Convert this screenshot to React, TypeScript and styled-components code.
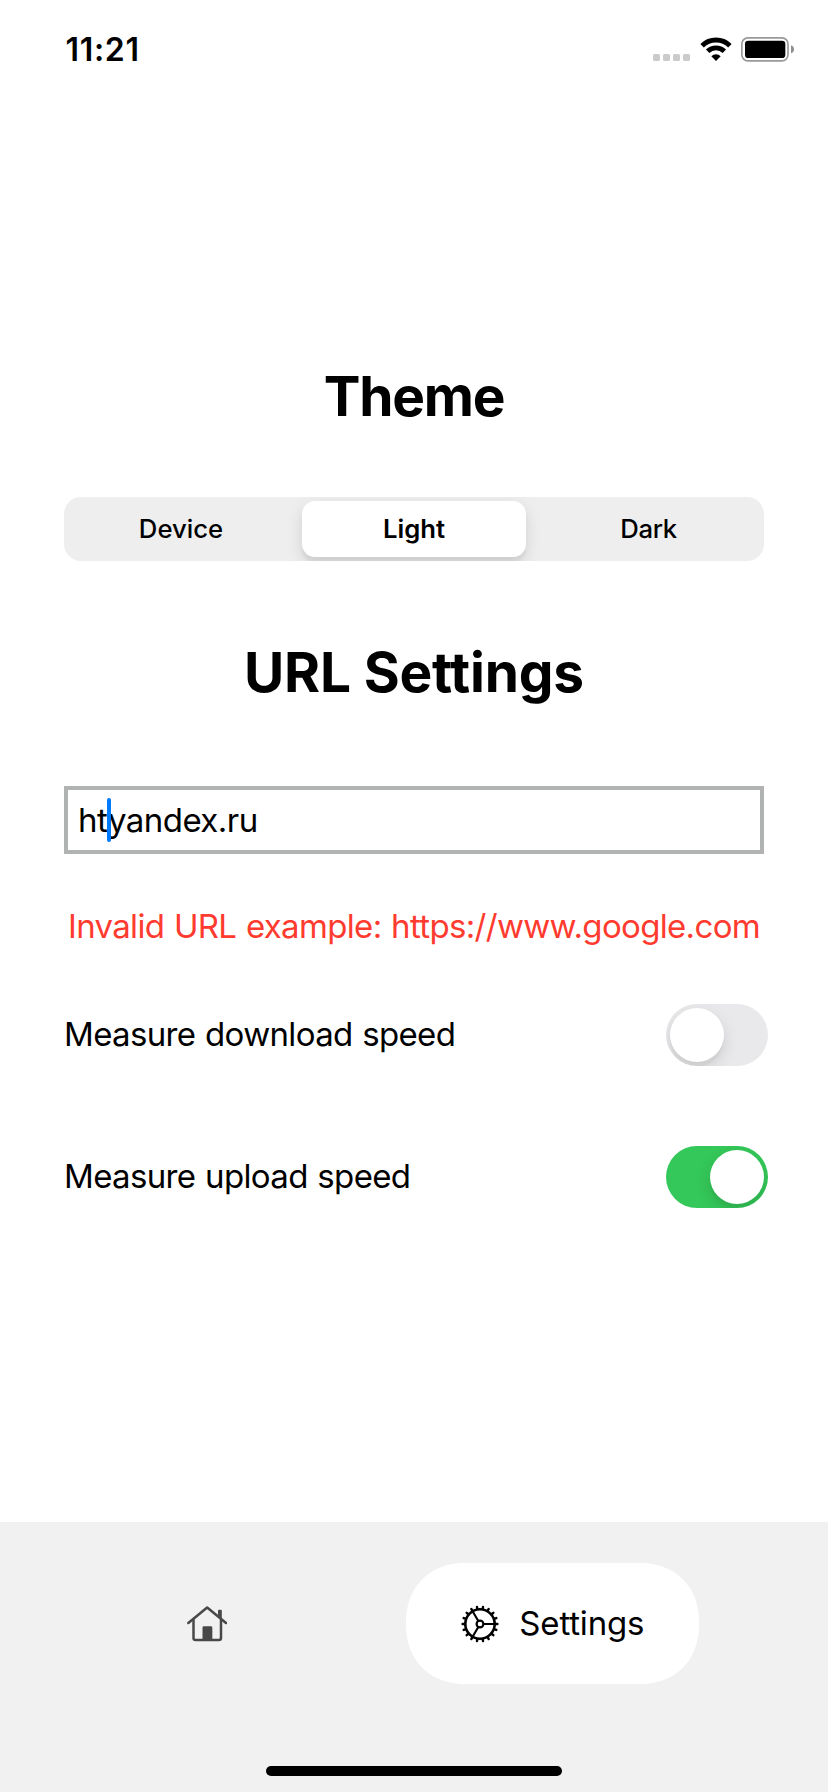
import React, { useState } from "react";
import styled, { createGlobalStyle } from "styled-components";

const GlobalStyle = createGlobalStyle`
  * { box-sizing: border-box; }
  body { margin: 0; background: #fff; }
  button { border: 0; padding: 0; background: none; font: inherit; color: inherit; }
`;

const Screen = styled.div`
  display: flex;
  flex-direction: column;
  width: 828px;
  height: 1792px;
  background: #fff;
  color: #000;
  font-family: Inter, "Liberation Sans", sans-serif;
  font-size: 33px;
  line-height: 40px;
  overflow: hidden;
  white-space: nowrap;
`;

const StatusBar = styled.header`
  display: flex;
  justify-content: space-between;
  height: 88px;
  padding: 30px 32px 0 65.5px;
`;

const Clock = styled.time`
  font-size: 32px;
  line-height: 39px;
  font-weight: 600;
  letter-spacing: 0.7px;
`;

const StatusIcons = styled.div`
  display: flex;
  align-items: flex-start;
  padding-top: 6px;
`;

const SignalDots = styled.div`
  display: flex;
  gap: 3px;
  margin: 18px 8.5px 0 0;
`;

const Dot = styled.span`
  width: 7px;
  height: 7px;
  border-radius: 1.5px;
  background: #cbcbcb;
`;

const Battery = styled.svg`
  width: 56px;
  height: 26px;
  margin-left: 7.5px;
`;

const Content = styled.main`
  display: flex;
  flex: 1;
  flex-direction: column;
  padding: 275px 64px 0;
`;

const Heading = styled.h1<{ $spacing: number }>`
  margin: 0;
  font-size: 55px;
  line-height: 66px;
  font-weight: 700;
  text-align: center;
  letter-spacing: ${(p) => p.$spacing}px;
`;

const Segmented = styled.div`
  display: grid;
  grid-template-columns: 1fr 224px 1fr;
  height: 64px;
  margin: 68px 0 78px;
  padding: 4px 0;
  border-radius: 17px;
  background: #eee;
  overflow: hidden;
`;

const Segment = styled.button<{ $active: boolean; $side: "left" | "mid" | "right" }>`
  height: 56px;
  padding: ${(p) => (p.$side === "left" ? "0 4px 2px 0" : p.$side === "right" ? "0 0 2px 7px" : "0 0 2px")};
  border-radius: 13px;
  font-size: 25.7px;
  line-height: 31px;
  font-weight: ${(p) => (p.$active ? 600 : 500)};
  letter-spacing: ${(p) => (p.$side === "right" ? -0.35 : 0)}px;
  background: ${(p) => (p.$active ? "#fff" : "transparent")};
  box-shadow: ${(p) => (p.$active ? "0 6px 16px rgba(0,0,0,.12), 0 6px 2px rgba(0,0,0,.04)" : "none")};
`;

const Field = styled.div`
  position: relative;
  height: 68px;
  margin-top: 81px;
  padding: 10px;
  border: 4px solid #b1b3b2;
  letter-spacing: -0.53px;
`;

const Caret = styled.span`
  position: absolute;
  top: 8px;
  left: 39px;
  width: 4px;
  height: 44px;
  border-radius: 2px;
  background: #007aff;
`;

const ErrorText = styled.p`
  margin: 52px -10px 58px;
  color: #ff3b30;
  text-align: center;
  letter-spacing: -0.67px;
  word-spacing: 1px;
`;

const Row = styled.div`
  display: flex;
  align-items: center;
  justify-content: space-between;
  height: 62px;
  margin: 0 -4px 80px 0;
`;

const RowLabel = styled.span`
  padding-bottom: 2px;
  letter-spacing: -0.65px;
  word-spacing: 1px;
`;

const Switch = styled.button<{ $on: boolean }>`
  display: flex;
  justify-content: ${(p) => (p.$on ? "flex-end" : "flex-start")};
  width: 102px;
  height: 62px;
  padding: 4px;
  border-radius: 31px;
  background: ${(p) => (p.$on ? "#34c759" : "#e9e9eb")};
  overflow: hidden;
`;

const Knob = styled.span`
  width: 54px;
  height: 54px;
  border-radius: 50%;
  background: #fff;
  box-shadow: 0 6px 16px rgba(0, 0, 0, 0.12), 0 5px 2px rgba(0, 0, 0, 0.03);
`;

const TabBar = styled.footer`
  display: flex;
  flex-direction: column;
  align-items: center;
  height: 270px;
  padding-top: 41px;
  background: #f1f1f1;
`;

const Tabs = styled.nav`
  display: flex;
  width: 828px;
  height: 121px;
  padding-left: 8px;
`;

const Tab = styled.button<{ $active?: boolean }>`
  display: flex;
  align-items: center;
  justify-content: ${(p) => (p.$active ? "flex-start" : "center")};
  gap: 19px;
  width: ${(p) => (p.$active ? 293 : 397.5)}px;
  padding: ${(p) => (p.$active ? "0 0 0 54.8px" : "2px 0 0")};
  border-radius: 59px;
  corner-shape: superellipse(1.1);
  background: ${(p) => (p.$active ? "#fff" : "transparent")};
  letter-spacing: -0.16px;
`;

const TabLabel = styled.span`
  padding-bottom: 2px;
`;

const HomeIndicator = styled.div`
  width: 296px;
  height: 10px;
  margin-top: 82px;
  border-radius: 5px;
  background: #000;
`;

const WifiIcon = () => (
  <svg width="34" height="26" viewBox="175 48 102 78" fill="none" stroke="#000" strokeWidth="14.5">
    <path d="M184.3 77.3A59 59 0 0 1 267.7 77.3" />
    <path d="M201 94A35.5 35.5 0 0 1 251 94" />
    <path d="M226 123L212 108.5A20 20 0 0 1 240 108.5Z" fill="#000" stroke="none" />
  </svg>
);

const BatteryIcon = () => (
  <Battery viewBox="300 48 168 78">
    <rect x="305.5" y="53.5" width="138.5" height="69" rx="18" fill="none" stroke="#999" strokeWidth="5" />
    <rect x="315" y="62.5" width="121" height="51.5" rx="10" />
    <path d="M453 76Q462 79 462 88T453 100Z" fill="#8e8e8e" />
  </Battery>
);

const HouseIcon = () => (
  <svg width="40" height="36.67" viewBox="50 50 120 110" fill="none" stroke="#484848" strokeLinecap="round" strokeLinejoin="round">
    <path d="M54 101L110.5 54.5L167 101" strokeWidth="7.5" />
    <path d="M69.5 91V146Q69.5 152 76 152H145.5Q152 152 152 146V91" strokeWidth="7.5" />
    <path d="M143 78V64Q143 61 146 61H151.500Q154.500 61 154.500 64V88Z" fill="#484848" stroke="none" />
    <path d="M96.500 152V115Q96.500 111 100.500 111H122Q126 111 126 115V152Z" fill="#484848" stroke="none" />
  </svg>
);

const GearIcon = () => (
  <svg width="40" height="40" viewBox="-20 -20 40 40" fill="none" stroke="#000" strokeLinecap="round">
    <circle r="14.7" strokeWidth="2.6" />
    <circle r="3.4" strokeWidth="2.2" />
    {Array.from({ length: 18 }, (_, i) => (
      <path key={i} d="M15.5 0H17.4" strokeWidth="2.4" transform={`rotate(${i * 20})`} />
    ))}
    {[0, 120, 240].map((a) => (
      <path key={a} d="M4 0H14.5" strokeWidth="2.1" transform={`rotate(${a})`} />
    ))}
  </svg>
);

export default function App() {
  const [theme, setTheme] = useState("Light");
  const [download, setDownload] = useState(false);
  const [upload, setUpload] = useState(true);

  return (
    <Screen>
      <GlobalStyle />
      <StatusBar>
        <Clock>11:21</Clock>
        <StatusIcons>
          <SignalDots>
            <Dot />
            <Dot />
            <Dot />
            <Dot />
          </SignalDots>
          <WifiIcon />
          <BatteryIcon />
        </StatusIcons>
      </StatusBar>

      <Content>
        <Heading $spacing={-1.2}>Theme</Heading>
        <Segmented>
          <Segment $side="left" $active={theme === "Device"} onClick={() => setTheme("Device")}>Device</Segment>
          <Segment $side="mid" $active={theme === "Light"} onClick={() => setTheme("Light")}>Light</Segment>
          <Segment $side="right" $active={theme === "Dark"} onClick={() => setTheme("Dark")}>Dark</Segment>
        </Segmented>

        <Heading $spacing={-0.2}>URL Settings</Heading>
        <Field>
          htyandex.ru
          <Caret />
        </Field>
        <ErrorText>Invalid URL example: https://www.google.com</ErrorText>

        <Row>
          <RowLabel>Measure download speed</RowLabel>
          <Switch $on={download} onClick={() => setDownload(!download)} aria-label="Measure download speed">
            <Knob />
          </Switch>
        </Row>
        <Row>
          <RowLabel>Measure upload speed</RowLabel>
          <Switch $on={upload} onClick={() => setUpload(!upload)} aria-label="Measure upload speed">
            <Knob />
          </Switch>
        </Row>
      </Content>

      <TabBar>
        <Tabs>
          <Tab aria-label="Home">
            <HouseIcon />
          </Tab>
          <Tab $active>
            <GearIcon />
            <TabLabel>Settings</TabLabel>
          </Tab>
        </Tabs>
        <HomeIndicator />
      </TabBar>
    </Screen>
  );
}
